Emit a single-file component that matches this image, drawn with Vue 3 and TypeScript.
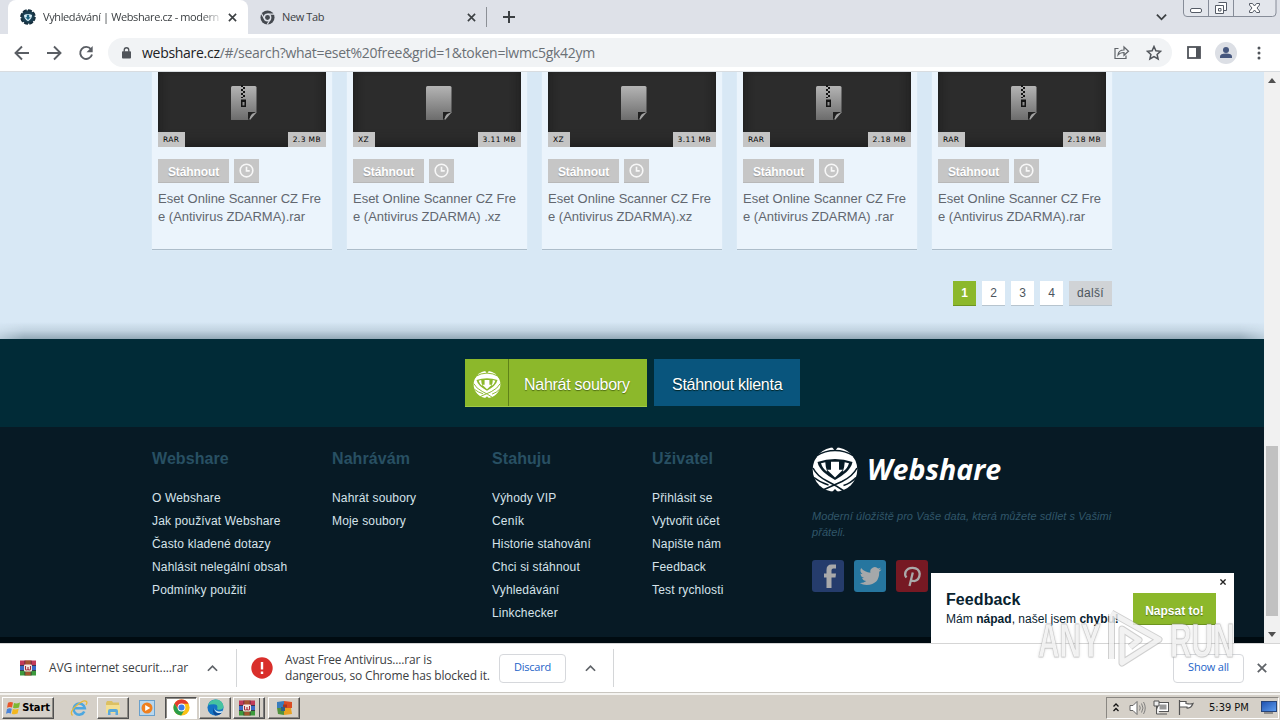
<script setup lang="ts">
interface FileCard {
  ext: string
  size: string
  rest: string
}
interface LinkColumn {
  title: string
  links: string[]
}

const files: FileCard[] = [
  { ext: 'RAR', size: '2.3 MB', rest: 'e (Antivirus ZDARMA).rar' },
  { ext: 'XZ', size: '3.11 MB', rest: 'e (Antivirus ZDARMA) .xz' },
  { ext: 'XZ', size: '3.11 MB', rest: 'e (Antivirus ZDARMA).xz' },
  { ext: 'RAR', size: '2.18 MB', rest: 'e (Antivirus ZDARMA) .rar' },
  { ext: 'RAR', size: '2.18 MB', rest: 'e (Antivirus ZDARMA).rar' },
]
const pages: string[] = ['1', '2', '3', '4', 'další']
const columns: LinkColumn[] = [
  { title: 'Webshare', links: ['O Webshare', 'Jak používat Webshare', 'Často kladené dotazy', 'Nahlásit nelegální obsah', 'Podmínky použití'] },
  { title: 'Nahrávám', links: ['Nahrát soubory', 'Moje soubory'] },
  { title: 'Stahuju', links: ['Výhody VIP', 'Ceník', 'Historie stahování', 'Chci si stáhnout', 'Vyhledávání', 'Linkchecker'] },
  { title: 'Uživatel', links: ['Přihlásit se', 'Vytvořit účet', 'Napište nám', 'Feedback', 'Test rychlosti'] },
]
</script>

<template>
  <div class="screen">
    <svg class="defs" width="0" height="0" aria-hidden="true">
      <defs>
        <linearGradient id="sheet" x1="0" y1="0" x2="0" y2="1">
          <stop offset="0" stop-color="#b4b4b4" />
          <stop offset="1" stop-color="#6c6c6c" />
        </linearGradient>
        <linearGradient id="monitor" x1="0" y1="0" x2="1" y2="1">
          <stop offset="0" stop-color="#1d4fae" />
          <stop offset="1" stop-color="#5f9ff0" />
        </linearGradient>
        <symbol id="winrar" viewBox="0 0 16 16">
          <rect width="16" height="5" y="0.5" fill="#c23a5a" />
          <rect width="16" height="5" y="5.5" fill="#3a68c8" />
          <rect width="16" height="5" y="10.5" fill="#3d9a3d" />
          <path d="M0 5.500h16M0 10.500h16" stroke="#2b2338" stroke-width="0.8" />
          <path d="M5 .5v15M11 .5v15" stroke="#3b2030" stroke-width="0.8" />
          <rect x="5.400" y="0.5" width="5.200" height="4" fill="#a4552f" />
          <rect x="5.400" y="11.500" width="5.200" height="4" fill="#a4552f" />
          <rect x="4" y="4.500" width="8" height="7" rx="1" fill="#f3eae2" />
          <path d="M5.500 6v3.200q0 .8 1.200.8T8 9V7v2q0 1 1.200 1t1.300-.8V6" fill="none" stroke="#a3283c" stroke-width="1.100" />
        </symbol>
        <symbol id="chrome" viewBox="0 0 20 20">
          <circle cx="10" cy="10" r="9.500" fill="#fbc116" />
          <path d="M1.800 5.200A9.500 9.500 0 0 1 18.300 5.500H10L6 12.200Z" fill="#e33b2e" />
          <path d="M1.800 5.200A9.500 9.500 0 0 0 9.600 19.500L13.800 12.300 10 14.300 6 12.300Z" fill="#2a9d4a" />
          <circle cx="10" cy="10" r="4.600" fill="#fff" />
          <circle cx="10" cy="10" r="3.600" fill="#3b7de8" />
        </symbol>
        <symbol id="ball" viewBox="0 0 46 45">
          <circle cx="23" cy="22.500" r="22.300" fill="#fff" />
          <g fill="none" stroke="currentColor">
            <path d="M4 9Q13 3.500 23 3.500T42 9" stroke-width="1.600" />
            <path d="M1 21Q5 29 15 34T32 44M45 21Q41 29 30 34.500L12 42.500M2 30.500Q8 35.500 16.500 38M44 30.500Q39 36 31.500 38.500" stroke-width="1.600" />
          </g>
          <path d="M20 0L23 4 26 0ZM0 9l5 1-4 4ZM46 9l-5 1 4 4ZM20 45l3-3 3 3Z" fill="currentColor" />
          <path d="M5.500 15Q14 12 23 12T40.500 15Q39.500 20 34.500 25 30 29 23 33 16 29 11.500 25 6.500 20 5.500 15Z" fill="currentColor" />
          <path d="M9 16.200L13.300 15.200Q13.500 20 15.200 24.800 10.500 21.500 9 16.200ZM37 16.200L32.700 15.200Q32.500 20 30.800 24.800 35.500 21.500 37 16.200Z" fill="#fff" />
          <path d="M19 14.800h8v8h4L23 30.500l-8-7.700h4Z" fill="#fff" />
        </symbol>
      </defs>
    </svg>

    <header class="chrome">
      <div class="tabs">
        <div class="tab active">
          <svg class="fav" viewBox="0 0 16 16" width="16" height="16">
            <circle cx="8" cy="8" r="6.800" fill="#1b3f52" stroke="#17303f" stroke-width="2" stroke-dasharray="4 1.300" />
            <path d="M4 6q4-2.200 8 0 0 4-4 6.300Q4 10 4 6Z" fill="#d7eef7" />
            <path d="M6.800 5.800h2.400v2.500h1.500L8 11 5.300 8.300h1.500Z" fill="#1d6480" />
          </svg>
          <span class="tab-title">Vyhledávání | Webshare.cz - modern</span>
          <svg class="close" viewBox="0 0 10 10" width="9" height="9"><path d="M1 1l8 8M9 1L1 9" stroke="#3c4043" stroke-width="1.800" /></svg>
        </div>
        <div class="tab second">
          <svg viewBox="0 0 16 16" width="15" height="15">
            <circle cx="8" cy="8" r="7.500" fill="#45494f" />
            <circle cx="8" cy="8" r="3.400" fill="#45494f" stroke="#dee1e8" stroke-width="1.500" />
            <path d="M8 4.500h7M5 9.800L1.500 3.800M11 9.800L7.600 15.500" stroke="#dee1e8" stroke-width="1.300" />
          </svg>
          <span class="tab-title new">New Tab</span>
          <svg class="close" viewBox="0 0 10 10" width="9" height="9"><path d="M1 1l8 8M9 1L1 9" stroke="#3c4043" stroke-width="1.800" /></svg>
        </div>
        <i class="tab-sep"></i>
        <svg class="plus" viewBox="0 0 12 12" width="12" height="12"><path d="M6 0v12M0 6h12" stroke="#3c4043" stroke-width="2" /></svg>
        <svg class="drop" viewBox="0 0 12 8" width="11" height="8"><path d="M1 1.500l5 5 5-5" fill="none" stroke="#3c4043" stroke-width="2" /></svg>
        <svg class="winbtns" viewBox="0 0 94 17" width="94" height="17">
          <path d="M.5 0V13q0 3.500 3.500 3.500H89.500q3.500 0 3.500-3.500V0M25.500 0V16M50.500 0V16" fill="#e3e6ec" stroke="#868c98" />
          <rect x="7.500" y="8.500" width="11" height="4" rx="1.500" fill="#fff" stroke="#555b66" />
          <path d="M35.500 2.500h8v8h-2.500M32.500 5.500h8v8h-8Z M35.500 8.500h2.500v2.500h-2.500Z" fill="#fff" stroke="#555b66" />
          <path d="M66.500 3.500h3l2 2.500 2-2.500h3v1.500l-2.500 3 2.500 3v1.500h-3l-2-2.500-2 2.500h-3V11l2.500-3-2.500-3Z" fill="#fff" stroke="#555b66" />
        </svg>
      </div>
      <div class="toolbar">
        <svg class="navs" viewBox="0 0 80 16" width="80" height="16">
          <g fill="none" stroke="#5a5e64" stroke-width="1.900">
            <path d="M15 8H2M8 1.500L1.500 8 8 14.500" />
            <path d="M33 8h13M40 1.500L46.500 8 40 14.500" />
            <path d="M77 4.300A6 6 0 1 0 78 9.500" />
          </g>
          <path d="M78.700 1v6.200h-6.200Z" fill="#5a5e64" />
        </svg>
        <div class="omnibox">
          <svg viewBox="0 0 10 13" width="9" height="12"><rect x="0" y="4.500" width="10" height="8" rx="1" fill="#50545a" /><path d="M2.500 5V3.200a2.500 2.500 0 0 1 5 0V5" fill="none" stroke="#50545a" stroke-width="1.500" /></svg>
          <span class="url"><b>webshare.cz</b>/#/search?what=eset%20free&amp;grid=1&amp;token=lwmc5gk42ym</span>
          <svg class="share" viewBox="0 0 16 15" width="16" height="15"><path d="M4.500 3.500H1V13.500H12V10.500M4 10q.5-5 6-5V2l4.500 4.200L10 10.300V7.500Q6 7.500 4 10Z" fill="none" stroke="#5f6368" stroke-width="1.200" /></svg>
          <svg viewBox="0 0 16 16" width="16" height="16"><path d="M8 1.500l1.900 4.300 4.700.5-3.500 3.100 1 4.600L8 11.600 3.900 14l1-4.600L1.400 6.300l4.700-.5Z" fill="none" stroke="#50545a" stroke-width="1.500" /></svg>
        </div>
        <svg class="panel" viewBox="0 0 14 13" width="14" height="13"><rect x="1" y="1" width="12" height="11" fill="#fff" stroke="#50545a" stroke-width="1.800" /><rect x="9" y="1" width="4" height="11" fill="#50545a" /></svg>
        <svg class="avatar" viewBox="0 0 22 22" width="22" height="22"><circle cx="11" cy="11" r="11" fill="#dcdfe5" /><circle cx="11" cy="8" r="3" fill="#46577e" /><path d="M5 16v-1.500q0-3 6-3t6 3V16Z" fill="#46577e" /></svg>
        <svg class="dots" viewBox="0 0 4 14" width="4" height="14"><g fill="#50545a"><circle cx="2" cy="2" r="1.500" /><circle cx="2" cy="7" r="1.500" /><circle cx="2" cy="12" r="1.500" /></g></svg>
      </div>
    </header>

    <div class="viewport">
      <main class="page">
        <section class="results">
          <div class="cards">
            <article v-for="(f, i) in files" :key="i" class="card">
              <div class="thumb">
                <svg class="doc" viewBox="0 0 26 36" width="26" height="36">
                  <path d="M0 2.500q0-1.500 1.500-1.500H24q1.500 0 1.500 1.500V27l-8 8H0Z" fill="url(#sheet)" />
                  <path d="M17 35V27h8.500Z" fill="#202020" />
                  <path d="M18.500 34q.5-3 2-4.500 2-1.500 5-2.500v.5L19 35Z" fill="#a2a2a2" />
                  <g v-if="f.ext === 'RAR'" fill="#151515">
                    <path d="M10 0h2v2h-2zM12 2h2v2h-2zM10 4h2v2h-2zM12 6h2v2h-2zM10 8h2v2h-2zM12 10h2v2h-2zM10 12h2v1h-2z" />
                    <path d="M10 14.500h5v7.500h-5zM11.500 17v3.500h2v-3.500z" fill-rule="evenodd" />
                  </g>
                </svg>
                <div class="badges"><span>{{ f.ext }}</span><span>{{ f.size }}</span></div>
              </div>
              <div class="actions">
                <a class="dl">Stáhnout</a>
                <a class="later"><svg viewBox="0 0 14 14" width="15" height="15"><circle cx="7" cy="7" r="5.900" fill="none" stroke="#f7f7f7" stroke-width="1.500" /><path d="M7 3.500V7.300H10" fill="none" stroke="#f7f7f7" stroke-width="1.500" /></svg></a>
              </div>
              <p class="name">Eset Online Scanner CZ Fre<br />{{ f.rest }}</p>
            </article>
          </div>
          <nav class="pager">
            <a v-for="(p, i) in pages" :key="p" :class="{ on: i === 0, next: i === 4 }">{{ p }}</a>
          </nav>
        </section>
        <div class="shade"></div>
        <section class="cta">
          <a class="upload">
            <span class="mark">
              <svg width="28" height="27"><use href="#ball" /></svg>
            </span>
            <span class="label">Nahrát soubory</span>
          </a>
          <a class="client">Stáhnout klienta</a>
        </section>
        <footer class="footer">
          <div v-for="(c, i) in columns" :key="c.title" class="col" :class="{ wide: i === 0 }">
            <h3>{{ c.title }}</h3>
            <a v-for="l in c.links" :key="l">{{ l }}</a>
          </div>
          <div class="brand">
            <div class="logo">
              <svg width="46" height="45"><use href="#ball" /></svg>
              <span>Webshare</span>
            </div>
            <p>Moderní úložiště pro Vaše data, která můžete sdílet s Vašimi<br />přáteli.</p>
            <div class="social">
              <svg viewBox="0 0 32 32" width="32" height="32"><rect width="32" height="32" rx="3" fill="#253c6c" /><path d="M14.500 28V17.500H12v-4h2.500V10q0-5.500 5-5.500H24v4h-2.700q-1.800 0-1.800 1.800v3.200h4.500l-.5 4h-4V28Z" fill="#a9a9aa" /></svg>
              <svg viewBox="0 0 32 32" width="32" height="32"><rect width="32" height="32" rx="3" fill="#26769f" /><path d="M27.500 9.200q-1.200.6-2.600.7 1.400-.9 2-2.400-1.300.8-2.800 1.100a4.500 4.500 0 0 0-7.700 4.100q-5.600-.3-9.300-4.700-1.900 3.700 1.400 6-1.100 0-2-.6 0 3.500 3.600 4.500-1 .3-2 .1 1 2.900 4.200 3.100-2.900 2.200-6.600 1.900 3.200 2 7 2 12.800-.5 12.500-13.200 1.400-1.100 2.300-2.600Z" fill="#a5a8aa" /></svg>
              <svg viewBox="0 0 32 32" width="32" height="32"><rect width="32" height="32" rx="3" fill="#761923" /><path d="M10.500 17.500q-2.300-2.500-.8-6 2-3.800 7-3.700 6.500.3 7 6-.2 6.600-5.500 7.300-2.500 0-3.200-1.700M16.800 12.500l-3.300 13.500" fill="none" stroke="#aaa" stroke-width="2.300" /></svg>
            </div>
          </div>
        </footer>
        <div class="bottomline"></div>
      </main>
      <aside class="scroll">
        <i class="arrow up"></i>
        <i class="thumbbar"></i>
        <i class="arrow down"></i>
      </aside>
      <div class="feedback">
        <div class="fb-text">
          <h4>Feedback</h4>
          <p>Mám <b>nápad</b>, našel jsem <b>chybu!</b></p>
        </div>
        <a class="write">Napsat to!</a>
        <svg class="fb-close" viewBox="0 0 7 7" width="6" height="6"><path d="M.5.5l6 6M6.500.5l-6 6" stroke="#222" stroke-width="1.600" /></svg>
      </div>
    </div>

    <div class="shelf">
      <svg class="rar" width="16" height="16"><use href="#winrar" /></svg>
      <span class="dl-name">AVG internet securit....rar</span>
      <svg class="chev c1" viewBox="0 0 12 8" width="11" height="8"><path d="M1 7l5-5 5 5" fill="none" stroke="#5f6368" stroke-width="1.900" /></svg>
      <i class="vsep"></i>
      <svg class="warn" viewBox="0 0 22 22" width="22" height="22"><circle cx="11" cy="11" r="10.700" fill="#d92f2b" /><path d="M11 5v7.500M11 14.500v2.500" stroke="#fff" stroke-width="2.400" /></svg>
      <p class="danger">Avast Free Antivirus....rar is<br />dangerous, so Chrome has blocked it.</p>
      <button class="discard">Discard</button>
      <svg class="chev c2" viewBox="0 0 12 8" width="11" height="8"><path d="M1 7l5-5 5 5" fill="none" stroke="#5f6368" stroke-width="1.900" /></svg>
      <i class="vsep v2"></i>
      <button class="showall">Show all</button>
      <svg class="shelf-close" viewBox="0 0 10 10" width="10" height="10"><path d="M.8.8l8.400 8.400M9.200.8L.8 9.200" stroke="#5f6368" stroke-width="1.800" /></svg>
    </div>

    <div class="taskbar">
      <div class="start">
        <svg viewBox="0 0 15 14" width="15" height="14"><path d="M2 1.800Q4.500.3 7 1.500L6 6.500Q3.500 5.500 1 6.800Z" fill="#e8562a" /><path d="M8 2Q10.500 3 14 1.500L13 6.500Q10 8 7 6.800Z" fill="#7db832" /><path d="M1 8Q3.500 6.700 5.800 7.700L4.800 12.500Q2.500 11.500 0 12.800Z" fill="#4a84d8" /><path d="M6.800 8Q9.500 9 12.700 7.700L11.600 12.500Q8.500 14 5.800 12.800Z" fill="#f3b71f" /></svg>
        <b>Start</b>
      </div>
      <div class="quick ie">
        <svg viewBox="0 0 18 18" width="18" height="18"><path d="M14.300 12.500A5.600 5.600 0 1 1 14.800 9.300H5" fill="none" stroke="#4da7e0" stroke-width="2.600" /><path d="M2.500 16.500Q-1 13 6.500 6.500T16.500 2.500q1 1-.5 3.500" fill="none" stroke="#e5b93a" stroke-width="1.300" /></svg>
      </div>
      <div class="task">
        <svg viewBox="0 0 18 16" width="18" height="16"><path d="M2 3l1-2h5l1 1.500h6V13H2Z" fill="#dcc062" /><path d="M2 5h14v8H2Z" fill="#f3df92" /><path d="M4 15v-4q0-2 2-2h6q2 0 2 2v4h-2.500v-3h-5v3Z" fill="#5aa9da" /></svg>
      </div>
      <div class="quick media">
        <svg viewBox="0 0 16 16" width="16" height="16"><rect x=".5" y=".5" width="15" height="15" fill="#b8d7ee" stroke="#69a0cc" /><circle cx="8" cy="8" r="5.500" fill="#ef8020" /><path d="M6.200 5v6l5-3Z" fill="#fff" /></svg>
      </div>
      <div class="task pressed"><svg width="17" height="17"><use href="#chrome" /></svg></div>
      <div class="task">
        <svg viewBox="0 0 18 18" width="17" height="17"><circle cx="9" cy="9" r="8.500" fill="#1473c4" /><path d="M1 7Q3 .5 9.500.5q7 .5 8 7 0 4-4.500 4-3 0-2-2.300.5-3.700-4-3.700Q3 5.500 1 7Z" fill="#45c3a0" /><path d="M7.200 8Q6 11.500 9 14q3 2 7 0-3 3.800-7.500 3.500Q5 14 7.200 8Z" fill="#0d4a96" /><path d="M8 8.200q-.7 4.300 4.500 5 2.500.2 4.500-1l-1 2q-3.500 1.300-6-.3T8 8.200Z" fill="#d6e9f5" /></svg>
      </div>
      <div class="task stack"><svg width="16" height="16"><use href="#winrar" /></svg></div>
      <div class="task">
        <svg viewBox="0 0 17 16" width="17" height="16"><path d="M1 2l7-1v7H1Z" fill="#397dbd" /><path d="M8 1l8 1v6H8Z" fill="#d94d24" /><path d="M1 8h7v7l-6-1Z" fill="#50913c" /><path d="M8 8h7l1 6-8 1Z" fill="#e8a122" /><path d="M7 4.500h4v3H7Z" fill="#a63720" /><path d="M5 7h4v4H5Z" fill="#2a5f8c" /></svg>
      </div>
      <div class="tray">
        <svg class="up2" viewBox="0 0 6 9" width="6" height="9"><path d="M.5 3.500L3 1l2.500 2.500M.5 8L3 5.500 5.500 8" fill="none" stroke="#111" stroke-width="1.300" /></svg>
        <svg class="spk" viewBox="0 0 17 14" width="17" height="14"><path d="M1 4.500h3l4-4v13l-4-4H1Z" fill="#fff" stroke="#666" /><path d="M10.500 4.500q1.500 2.500 0 5M12.500 2.500q3 4.500 0 9M14.500 1q3.500 6 0 12" fill="none" stroke="#777" stroke-width=".9" /></svg>
        <svg class="net" viewBox="0 0 17 15" width="17" height="15"><rect x="4.500" y="2.500" width="11" height="9" fill="#fff" stroke="#555" /><rect x="6.500" y="4.500" width="7" height="5" fill="#999" /><path d="M7 14h7M1 1h5v5H1ZM3.500 6v8H7" fill="#eee" stroke="#555" /></svg>
        <svg class="flag" viewBox="0 0 16 15" width="16" height="15"><path d="M1.500 0V15M2 1.500h6v2q4 1 7 0-2 5-6 4.500V7H2" fill="#fff" stroke="#555" stroke-width="1.200" /></svg>
        <span class="time">5:39 PM</span>
        <svg class="desk" viewBox="0 0 16 13" width="16" height="13"><rect x=".5" y=".5" width="15" height="10" fill="url(#monitor)" stroke="#274478" /><path d="M3 12h9" stroke="#777" stroke-width="1.500" /></svg>
      </div>
    </div>

    <div class="watermark">
      <span>ANY</span>
      <svg viewBox="0 0 56 64" width="56" height="64">
        <path d="M3.500 5V50M3.500 4L51 30.500 14 54V20L31 31 22 38" fill="none" stroke="#8a8a8a" stroke-opacity=".4" stroke-width="7" stroke-linejoin="round" />
        <path d="M3.500 5V50M3.500 4L51 30.500 14 54V20L31 31 22 38" fill="none" stroke="#fff" stroke-opacity=".72" stroke-width="5" stroke-linejoin="round" />
      </svg>
      <span>RUN</span>
    </div>
  </div>
</template>

<style>
html, body { margin: 0; overflow: hidden; }
</style>

<style scoped>
* { box-sizing: border-box; }
.screen { position: relative; width: 1280px; height: 720px; overflow: hidden; font-family: "Liberation Sans", Arial, sans-serif; display: flex; flex-direction: column; }
.defs { position: absolute; }
svg { display: block; flex: none; }
h3, h4, p { margin: 0; }

.chrome { height: 72px; flex: none; background: #fff; border-bottom: 1px solid #d8dce0; }
.tabs { height: 34px; background: #dee1e8; display: flex; align-items: center; padding-left: 8px; font-family: "Open Sans", "Noto Sans", sans-serif; font-size: 11px; color: #3c4043; }
.tab { display: flex; align-items: center; height: 34px; }
.active { width: 240px; background: #fff; border-radius: 8px 8px 0 0; padding-left: 12px; }
.second { width: 238px; padding-left: 12px; }
.tab-title { width: 177px; margin: 0 8px 0 7px; white-space: nowrap; letter-spacing: -.38px; padding-bottom: 1px; }
.active .tab-title { mask-image: linear-gradient(90deg, #000 158px, rgba(0, 0, 0, .2) 176px); }
.tab-title.new { width: 178px; margin: 0 7px 0 7px; }
.tab-sep { width: 1px; height: 20px; background: #8c9096; }
.plus { margin-left: 16px; }
.drop { margin-left: 641px; }
.winbtns { margin-left: 16px; align-self: flex-start; }
.toolbar { height: 37px; display: flex; align-items: center; }
.navs { margin-left: 14px; }
.omnibox { margin-left: 14px; width: 1064px; height: 29px; border-radius: 15px; background: #f1f3f5; display: flex; align-items: center; padding: 0 10px 0 14px; }
.url { font-family: "Open Sans", "Noto Sans", sans-serif; font-size: 14px; color: #6b7075; margin-left: 11px; letter-spacing: -.29px; white-space: nowrap; }
.url b { font-weight: 400; color: #202124; }
.share { margin-left: auto; margin-right: 16px; }
.panel { margin-left: 15px; }
.avatar { margin-left: 14px; }
.dots { margin-left: 20px; }

.viewport { position: relative; height: 571px; flex: none; display: flex; }
.page { width: 1264px; height: 571px; overflow: hidden; background: #d8e8f5; display: flex; flex-direction: column; }
.results { height: 250px; flex: none; }
.cards { display: flex; gap: 15px; margin-left: 152px; height: 178px; }
.card { width: 180px; background: #ebf4fc; border-bottom: 1px solid #adbdca; box-shadow: 0 0 2px #e4eff8; padding: 0 6px; }
.thumb { height: 75px; background: #2c2c2c; box-shadow: inset 0 -8px 14px -6px #1d1d1d, inset 8px 0 8px -6px #222, inset -8px 0 8px -6px #222; display: flex; flex-direction: column; justify-content: space-between; }
.doc { margin: 13px auto 0 73px; }
.badges { display: flex; justify-content: space-between; }
.badges span { height: 15px; padding: 0 5px; background: #c4c4c4; font: 7.5px/16px "DejaVu Sans", sans-serif; letter-spacing: .4px; color: #000; }
.badges span:first-child { padding-right: 6px; }
.actions { display: flex; gap: 5px; margin-top: 12px; }
.dl { width: 71px; height: 24px; background: #c6c6c6; color: #fff; font-weight: 700; font-size: 12px; line-height: 26px; text-align: center; border-bottom: 1px solid #b8b8b8; text-shadow: 0 1px 1px #999; letter-spacing: -.1px; }
.later { width: 25px; height: 24px; background: #c6c6c6; border-bottom: 1px solid #b8b8b8; padding: 4px 5px; }
.name { margin-top: 7px; font-size: 13px; line-height: 18px; color: #62676f; white-space: nowrap; letter-spacing: -.01px; }
.pager { display: flex; gap: 6px; justify-content: flex-end; width: 1112px; margin-top: 31px; }
.pager a { width: 23px; height: 25px; line-height: 24px; background: #fff; border-bottom: 1px solid #b7c4ce; font-size: 12px; text-align: center; color: #4c555d; }
.pager .on { background: #8cb82b; color: #fff; font-weight: 700; border-color: #6e9420; }
.pager .next { width: 43px; background: #d0d3d6; letter-spacing: .3px; }
.shade { height: 17px; flex: none; background: linear-gradient(180deg, rgba(60,90,105,0), rgba(60,90,105,.14) 50%, rgba(60,90,105,.44)); mask-image: linear-gradient(90deg, rgba(0,0,0,.45), #000 24px, #000 1240px, rgba(0,0,0,.45)); }
.cta { height: 88px; flex: none; background: #012b37; display: flex; gap: 7px; padding: 20px 0 0 465px; }
.upload { width: 182px; height: 48px; background: #8cb82b; border-bottom: 1px solid #a1cb45; display: flex; color: #fff; font-size: 16px; }
.mark { width: 44px; border-right: 1px solid #5f8218; padding: 12px 0 0 8px; color: #8cb82b; }
.label { flex: 1; line-height: 51px; padding-left: 15px; letter-spacing: -.27px; text-shadow: 0 1px 1px #4d6b12; }
.client { width: 146px; height: 47px; background: #09557d; color: #fff; font-size: 16px; line-height: 51px; padding-left: 18px; letter-spacing: -.28px; text-shadow: 0 1px 1px #022; white-space: nowrap; }
.footer { height: 210px; flex: none; background: #071a25; display: flex; padding: 20px 0 0 152px; }
.col { width: 160px; padding-top: 1px; }
.wide { width: 180px; }
.col h3 { font-size: 16px; line-height: 22px; color: #285063; margin-bottom: 17px; letter-spacing: .08px; }
.col a { display: block; font-size: 12px; line-height: 23px; color: #d6e3ea; letter-spacing: .16px; white-space: nowrap; }
.brand { width: 330px; }
.logo { display: flex; align-items: center; height: 45px; color: #071a25; }
.logo span { font: italic 700 28.6px/40px "Open Sans", "Noto Sans", sans-serif; color: #fff; margin-left: 9px; padding-bottom: 2px; }
.brand p { margin-top: 16px; font-size: 11px; font-style: italic; line-height: 16px; color: #31576a; letter-spacing: .07px; white-space: nowrap; }
.social { display: flex; gap: 10px; margin-top: 20px; }
.bottomline { height: 6px; flex: none; background: #000b11; }

.scroll { width: 16px; background: #f1f1f1; display: flex; flex-direction: column; align-items: center; }
.arrow { border: 4px solid transparent; }
.up { border-top: 0; border-bottom: 5px solid #505050; margin-top: 6px; }
.thumbbar { width: 12px; height: 170px; background: #c1c1c1; margin-top: 363px; }
.down { border-bottom: 0; border-top: 5px solid #505050; margin-top: 16px; }
.feedback { position: absolute; left: 931px; top: 501px; width: 303px; height: 70px; background: #fff; display: flex; color: #08222f; }
.fb-text { width: 202px; padding: 17px 0 0 15px; white-space: nowrap; }
.fb-text h4 { font-size: 16px; line-height: 20px; letter-spacing: .1px; }
.fb-text p { font-size: 12px; line-height: 18px; letter-spacing: .03px; }
.write { width: 83px; height: 32px; margin-top: 20px; background: #8cb82b; border-bottom: 1px solid #6d9420; color: #fff; font-weight: 700; font-size: 12px; line-height: 36px; text-align: center; text-shadow: 0 1px 1px #55761a; }
.fb-close { margin: 6px 0 0 4px; }

.shelf { height: 49px; flex: none; background: #fff; border-top: 1px solid #d5d5d5; display: flex; align-items: center; font-family: "Open Sans", "Noto Sans", sans-serif; font-size: 12px; color: #3c4043; white-space: nowrap; }
.rar { margin-left: 20px; }
.dl-name { width: 142px; margin-left: 13px; letter-spacing: -.08px; padding-bottom: 1px; }
.c1 { margin-left: 16px; }
.vsep { width: 1px; height: 38px; background: #d4d6d8; margin-left: 18px; }
.warn { margin-left: 14px; }
.danger { width: 208px; margin-left: 12px; line-height: 16px; letter-spacing: -.15px; }
.discard, .showall { font: 11px/14px "Open Sans", "Noto Sans", sans-serif; color: #2464c8; background: #fff; border: 1px solid #d6d8dc; border-radius: 4px; padding: 0 0 2px; height: 29px; letter-spacing: -.2px; }
.discard { width: 67px; margin-left: 6px; }
.c2 { margin-left: 19px; }
.v2 { margin-left: 17px; }
.showall { width: 71px; margin-left: 559px; }
.shelf-close { margin-left: 13px; }

.taskbar { height: 28px; flex: none; background: #d5d0c8; border-top: 1px solid #c9c6c0; box-shadow: inset 0 2px 0 #f5f4f1; display: flex; align-items: center; padding: 2px 1px 0 2px; }
.start, .task { border: 1px solid; border-color: #fff #505050 #505050 #fff; box-shadow: inset -1px -1px 0 #8d8a84; height: 22px; display: flex; align-items: center; justify-content: center; }
.start { width: 52px; gap: 1px; font-size: 11px; }
.start b { font: 700 11px/18px "DejaVu Sans Condensed", "DejaVu Sans", sans-serif; letter-spacing: -.1px; color: #000; }
.task { width: 32px; }
.ie { margin-left: 16px; margin-right: 9px; }
.media { margin: 0 10px; }
.pressed { background: #fff; border-color: #505050 #fff #fff #505050; box-shadow: inset 1px 1px 0 #8d8a84; margin-right: 2px; }
.stack { margin: 0 3px 0 2px; box-shadow: inset -1px -1px 0 #777, inset -4px 0 0 #d5d0c8, inset -5px 0 0 #555; justify-content: flex-start; padding-left: 5px; }
.tray { margin-left: auto; width: 173px; height: 22px; border: 1px solid; border-color: #8a8782 #fff #fff #8a8782; display: flex; align-items: center; padding-left: 6px; }
.spk { margin-left: 10px; }
.net { margin-left: 7px; }
.flag { margin-left: 8px; }
.time { font: 11px/18px "DejaVu Sans Condensed", "DejaVu Sans", sans-serif; color: #111; width: 43px; margin-left: 15px; white-space: nowrap; letter-spacing: 0; }
.desk { margin-left: 9px; }

.watermark { position: absolute; left: 1038px; top: 608px; width: 200px; height: 66px; display: flex; align-items: center; }
.watermark span { font: 700 48px/64px "Liberation Sans", Arial, sans-serif; color: rgba(255,255,255,.78); -webkit-text-stroke: .8px rgba(130,130,130,.3); text-shadow: 0 0 3px rgba(110,110,110,.45); display: block; width: 62px; transform: scaleX(.62); transform-origin: 0 50%; }
.watermark svg { margin: 0 6px 0 8px; }
</style>
